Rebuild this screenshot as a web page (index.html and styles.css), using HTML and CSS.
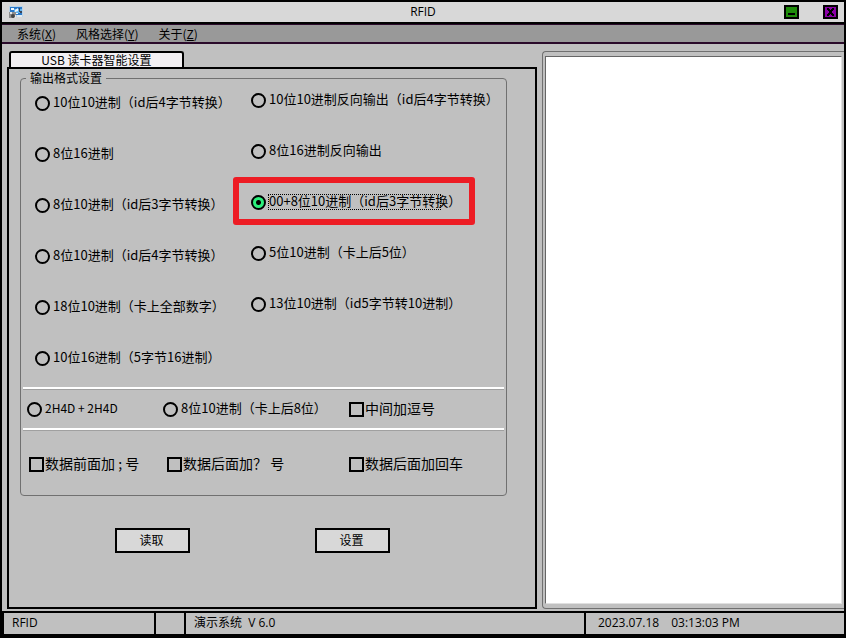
FILE: index.html
```html
<!DOCTYPE html>
<html lang="zh-CN">
<head>
<meta charset="utf-8">
<title>RFID</title>
<link rel="stylesheet" href="styles.css">
</head>
<body>
<header class="titlebar">
  <svg class="app-icon" viewBox="0 0 16 14" aria-hidden="true">
    <path fill="#b9d3e8" d="M1 1h14v11H1z"/>
    <path fill="#2a78c8" d="M2 2h12v8H2z"/>
    <path fill="#63b5ee" d="M6 4h8v4H6z"/>
    <path fill="#f2f8fc" d="M3 3h3v2H3zM7 5l3-2v3l-3 1zM6 8h4v1H6z"/>
    <path fill="#3b4658" d="M11 3h1v4h-1zM12 6h2v2h-2z"/>
    <path fill="#8e8e8e" d="M1 7h7v6H1z"/>
    <path fill="#e6e6e6" d="M2 7h2v2H2zM6 10h2v3H6z"/>
    <circle cx="5" cy="11" r="2" fill="#444"/>
    <path fill="#dfeaf2" d="M9 10h5v2H9z"/>
  </svg>
  <h1 class="title">RFID</h1>
  <div class="window-buttons">
    <button class="win-button minimize" type="button" aria-label="最小化"><svg viewBox="0 0 11 10"><path d="M2 6h7v2H2z"/></svg></button>
    <button class="win-button close" type="button" aria-label="关闭"><svg viewBox="0 0 11 10"><path d="M2 1h2v1h1v1h1V2h1V1h2v2H8v1H7v2h1v1h1v2H7V8H6V7H5v1H4v1H2V7h1V6h1V4H3V3H2z"/></svg></button>
  </div>
</header>
<nav class="menu">
  <a href="#">系统(<u>X</u>)</a>
  <a href="#">风格选择(<u>Y</u>)</a>
  <a href="#">关于(<u>Z</u>)</a>
</nav>
<main class="workspace">
  <section class="settings">
    <button class="tab" type="button">USB 读卡器智能设置</button>
    <form class="panel">
      <fieldset class="group">
        <legend>输出格式设置</legend>
        <div class="formats">
          <div class="column">
            <label class="option"><input type="radio" name="format"><span>10位10进制（id后4字节转换）</span></label>
            <label class="option"><input type="radio" name="format"><span>8位16进制</span></label>
            <label class="option"><input type="radio" name="format"><span>8位10进制（id后3字节转换）</span></label>
            <label class="option"><input type="radio" name="format"><span>8位10进制（id后4字节转换）</span></label>
            <label class="option"><input type="radio" name="format"><span>18位10进制（卡上全部数字）</span></label>
            <label class="option"><input type="radio" name="format"><span>10位16进制（5字节16进制）</span></label>
          </div>
          <div class="column column-right">
            <label class="option"><input type="radio" name="format"><span>10位10进制反向输出（id后4字节转换）</span></label>
            <label class="option"><input type="radio" name="format"><span>8位16进制反向输出</span></label>
            <label class="option highlighted"><input type="radio" name="format" checked><span>00+8位10进制（id后3字节转换）</span></label>
            <label class="option"><input type="radio" name="format"><span>5位10进制（卡上后5位）</span></label>
            <label class="option"><input type="radio" name="format"><span>13位10进制（id5字节转10进制）</span></label>
          </div>
        </div>
        <hr class="divider">
        <div class="card-row">
          <label class="option compact"><input type="radio" name="format"><span>2H4D + 2H4D</span></label>
          <label class="option"><input type="radio" name="format"><span>8位10进制（卡上后8位）</span></label>
          <label class="option check"><input type="checkbox"><span>中间加逗号</span></label>
        </div>
        <hr class="divider">
        <div class="suffix-row">
          <label class="option check"><input type="checkbox"><span>数据前面加 ; 号</span></label>
          <label class="option check"><input type="checkbox"><span>数据后面加？ 号</span></label>
          <label class="option check"><input type="checkbox"><span>数据后面加回车</span></label>
        </div>
      </fieldset>
      <div class="actions">
        <button class="action" type="button">读取</button>
        <button class="action" type="button">设置</button>
      </div>
    </form>
  </section>
  <section class="output">
    <textarea class="log" aria-label="输出"></textarea>
  </section>
</main>
<footer class="status">
  <span>RFID</span>
  <span></span>
  <span>演示系统&nbsp; V 6.0</span>
  <span class="clock"><span>2023.07.18</span><span>03:13:03 PM</span></span>
</footer>
</body>
</html>
```
FILE: styles.css
```css
* {
  box-sizing: border-box;
}

body {
  display: flex;
  flex-direction: column;
  min-height: 100vh;
  margin: 0;
  border: 2px solid #000;
  border-bottom-width: 4px;
  background: #c0c0c0;
  color: #000;
  font: 12px/16px "Noto Sans CJK SC", sans-serif;
}

button,
input,
textarea {
  margin: 0;
  font: inherit;
  color: inherit;
}

.titlebar {
  display: grid;
  grid-template-columns: 1fr auto 1fr;
  align-items: center;
  height: 22px;
  padding: 0 6px;
  border-bottom: 2px solid #000;
  background: #d8d8d8;
}

.app-icon {
  width: 16px;
  height: 14px;
}

.title {
  margin: 0;
  font: 12px/20px "Open Sans", sans-serif;
}

.window-buttons {
  display: flex;
  justify-content: flex-end;
  gap: 24px;
}

.win-button {
  width: 15px;
  height: 14px;
  padding: 0;
  border: 2px solid #000;
}

.win-button svg {
  display: block;
  width: 11px;
  height: 10px;
}

.minimize {
  background: #1e8c0a;
}

.close {
  background: #8b00a8;
}

.menu {
  display: flex;
  align-items: center;
  gap: 20px;
  height: 20px;
  padding: 0 15px;
  border-top: 1px solid #2a0a2a;
  border-bottom: 2px solid #2a0a2a;
  background: #999;
}

.menu a {
  color: inherit;
  text-decoration: none;
}

.workspace {
  display: grid;
  flex: 1;
  grid-template-columns: 530fr 302fr;
  gap: 5px;
  padding: 7px 0 2px 5px;
}

.settings {
  display: flex;
  flex-direction: column;
  align-items: flex-start;
}

.tab {
  width: 33%;
  height: 16px;
  margin-left: 2px;
  padding: 0;
  border: 2px solid #000;
  border-bottom: 0;
  border-radius: 3px 3px 0 0;
  background: #f3f0f3;
  line-height: 14px;
}

.panel {
  flex: 1;
  width: 100%;
  border: 2px solid #000;
}

.group {
  min-width: 0;
  margin: 1px 28px 0 11px;
  padding: 0 0 21px;
  border: 1px solid #707070;
  border-radius: 4px;
}

.group legend {
  margin-left: 5px;
  padding: 0 4px;
}

.formats {
  display: grid;
  grid-template-columns: 216fr 255fr;
  padding: 7px 0 19px 14px;
}

.column {
  display: flex;
  flex-direction: column;
  align-items: flex-start;
  gap: 31px;
}

.column-right {
  margin-top: -3px;
}

.option {
  display: flex;
  position: relative;
  align-items: center;
  gap: 3px;
  font-size: 13px;
  line-height: 20px;
  white-space: nowrap;
}

.option span {
  padding-bottom: 2px;
  line-height: 18px;
}

.compact {
  font-size: 12px;
}

.check {
  gap: 1px;
  font-size: 14px;
}

.option input {
  flex: none;
  appearance: none;
  width: 15px;
  height: 15px;
  border: 2px solid #000;
}

.option input[type="radio"] {
  border-radius: 50%;
}

.option input[type="radio"]:checked {
  background: radial-gradient(circle, #000 2px, #2cf07c 3px);
}

.highlighted::before {
  content: "";
  position: absolute;
  inset: -15px -14px -13px -18px;
  border: 6px solid #ed1c24;
  border-radius: 3px;
}

.highlighted span::after {
  content: "";
  position: absolute;
  inset: 2px 20px 2px 17px;
  border: 1px dotted #000;
}

.divider {
  height: 3px;
  margin: 0 2px;
  border: 0;
  border-top: 2px solid #fff;
  border-bottom: 1px solid #a0a0a0;
}

.card-row {
  display: grid;
  grid-template-columns: 136fr 186fr 157fr;
  padding: 9px 0 9px 6px;
}

.suffix-row {
  display: grid;
  grid-template-columns: 138fr 182fr 157fr;
  padding: 23px 0 0 8px;
}

.actions {
  display: flex;
  gap: 125px;
  padding: 32px 0 54px 106px;
}

.action {
  width: 75px;
  height: 25px;
  padding: 0 2px 2px 0;
  border: 2px solid #000;
  background: #d8d8d8;
}

.output {
  display: flex;
  padding: 4px 2px 4px 2px;
  border: 1px solid #707070;
  border-right: 0;
  border-radius: 4px 0 0 4px;
}

.log {
  flex: 1;
  min-width: 0;
  border: 1px solid;
  border-color: #666 #e0e0e0 #e0e0e0 #666;
  border-radius: 0;
  background: #fff;
  resize: none;
}

.status {
  display: grid;
  grid-template-columns: 152fr 30fr 400fr 258fr;
  height: 23px;
  border-top: 2px solid #000;
  border-left: 2px solid #000;
  font: 12px/20px "Open Sans", "Noto Sans CJK SC", sans-serif;
}

.status > span {
  padding-left: 8px;
  border-right: 2px solid #000;
}

.status > .clock {
  display: flex;
  gap: 12px;
  padding-left: 12px;
  border-right: 0;
}
```
